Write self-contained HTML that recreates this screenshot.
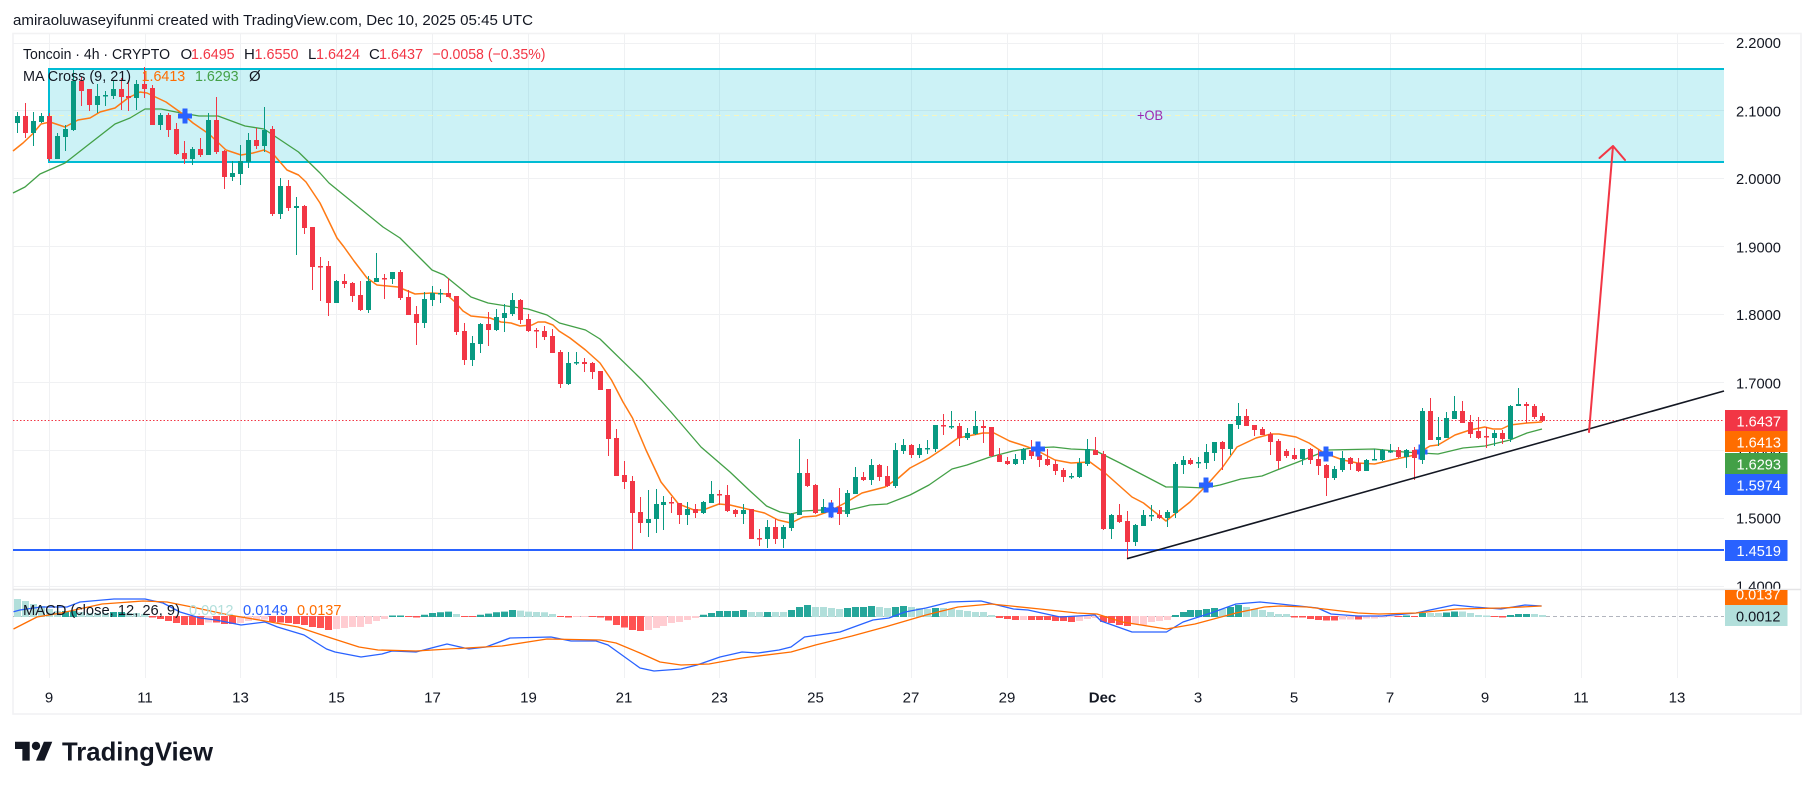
<!DOCTYPE html>
<html lang="en">
<head>
<meta charset="utf-8">
<title>Toncoin 4h chart</title>
<style>
html,body{margin:0;padding:0;background:#fff;width:1814px;height:789px;overflow:hidden}
svg{display:block}
text{font-family:"Liberation Sans",sans-serif;font-size:15px;fill:#131722}
.r{fill:#f23645}
.w{fill:#fff}
</style>
</head>
<body>
<svg width="1814" height="789" viewBox="0 0 1814 789" xmlns="http://www.w3.org/2000/svg">
<rect width="1814" height="789" fill="#fff"/>
<text x="13" y="25" style="font-size:14.5px" textLength="520" lengthAdjust="spacingAndGlyphs">amiraoluwaseyifunmi created with TradingView.com, Dec 10, 2025 05:45 UTC</text>

<!-- frame -->
<rect x="13" y="33.5" width="1788" height="680.5" fill="#fff" stroke="#f2f2f3" stroke-width="1.6"/>

<!-- grid -->
<path fill="none" stroke="#f0f1f3" stroke-width="1" d="M49.5 34V678M145.5 34V678M240.5 34V678M336.5 34V678M432.5 34V678M528.5 34V678M624.5 34V678M719.5 34V678M815.5 34V678M911.5 34V678M1007.5 34V678M1102.5 34V678M1198.5 34V678M1294.5 34V678M1390.5 34V678M1485.5 34V678M1581.5 34V678M1677.5 34V678"/>
<path fill="none" stroke="#f0f1f3" stroke-width="1" d="M13 43.5H1724M13 110.5H1724M13 178.5H1724M13 246.5H1724M13 314.5H1724M13 382.5H1724M13 450.5H1724M13 518.5H1724M13 586.5H1724"/>

<!-- zone -->
<rect x="49" y="69" width="1675" height="93" fill="#00bcd4" fill-opacity=".2"/>
<path fill="none" stroke="#00bcd4" stroke-width="2" d="M1724 69H49V162H1724"/>
<path fill="none" stroke="#f5f5c0" stroke-width="1" stroke-dasharray="5 4" d="M50 115.5H1724"/>
<text x="1137" y="120" style="font-size:14px;fill:#9c27b0" textLength="26" lengthAdjust="spacingAndGlyphs">+OB</text>

<!-- last price, support -->
<path fill="none" stroke="#f23645" stroke-width="1" stroke-dasharray="1.5 2" d="M13 420.5H1724"/>
<path fill="none" stroke="#2962ff" stroke-width="2" d="M13 550H1724"/>

<!-- MA21 -->
<path fill="none" stroke="#43a047" stroke-width="1.3" stroke-linejoin="round" d="M13 193L25 187L40 174L65 163L88 145L115 124L130 118L145 109L161 109L176 112L199 116L218 116L245 126L264 129L298.5 152L320 173L329 183L383 227L400 238L421 259L432 270L444 275L471 297L488 303L513 307L528 309L547 315L559.5 323L585.5 330L600 339L642 380L671 412L701 447L730 472L749 490L766.5 506L780 512L791 514L803 511L822 510L845 511L870 505L887 504L910 495L929 485L952 469L967 465L990 457L1013 451L1032 448L1053.5 447L1071 449L1094 450L1120 463L1143 475L1166 487L1182 487L1205 488L1220 485L1241 479L1262 476L1277 470L1298 462L1328 450L1374.5 449L1404 452L1438 454L1463 448L1485 446L1510 440L1527 433L1542 429"/>
<!-- MA9 -->
<path fill="none" stroke="#ff7a14" stroke-width="1.5" stroke-linejoin="round" d="M13 151L23 143L32.5 134L41 124L50 122L65 127L78 120L90 118L100 112L115 108L128 98L140 92L147 93L166 102L180 112L193 123L209 134L226 150L241 155L253 153L264 150L274 155L287 170L298.5 175L306 182L320 203L337 238L344 247L354 261L367 278L377 285L398 287L415 294L432 293L446 294L455 302L463 311L471 316L490 318L501 322L511 323L520 326L532 325L538 322L545 322L553 325L559 331L570 338L585.5 350L600 363L611.5 380L623 402L632.5 418L646 450L661 482L678.5 504L694 510L703 510L719 504L730 505L747 509L764.5 513L778 520L791 523L803 517L816 516L830 511L845 503L862 493L885 487L898.5 478L910 468L929 458L944 448L958 438L983 433L994 433L1009.5 441L1025 446L1036 450L1055 460L1071 463L1090 462L1105 473L1132 497L1143.5 503L1166 521L1190 502L1205 487L1222 468L1237 447L1256 438L1271 434L1279 434L1296 437L1309 443L1324 453L1343 460L1357.5 463L1374.5 464L1396 459L1415 455L1430 446L1438 445L1455 435L1470 430L1484.6 427L1493 429L1501.5 429L1510 425L1527 423L1542 422"/>

<!-- cross behind candle -->
<path fill="#2962ff" d="M1418.5 444.5h5v5h4v5h-4v5h-5v-5h-4v-5h4z"/>

<!-- candles: green wicks -->
<path fill="none" stroke="#089981" stroke-width="1" d="M17.5 112V133M33.5 112V146M41.5 113V123M57.5 133V159M65.5 125V151M73.5 70V131M97.5 84V113M105.5 91V106M113.5 80V99M136.5 80V110M160.5 113V130M192.5 147V165M208.5 113V155M232.5 161V181M240.5 145V185M248.5 133V168M264.5 107V152M280.5 178V219M296.5 197V255M336.5 280V303M368.5 276V313M376.5 253V282M392.5 272V284M424.5 292V328M432.5 286V306M440.5 289V303M472.5 336V366M480.5 323V353M496.5 309V331M504.5 304V332M512.5 293V316M568.5 352V385M576.5 352V365M648.5 490V537M656.5 489V533M663.5 496V530M687.5 502V525M703.5 501V514M711.5 481V503M743.5 504V524M767.5 520V548M783.5 525V548M791.5 513V531M799.5 439V515M823.5 499V513M847.5 490V517M855.5 467V494M871.5 459V485M895.5 443V488M903.5 439V454M919.5 444V458M927.5 440V454M935.5 425V452M951.5 411V429M967.5 428V440M975.5 411V435M1015.5 454V465M1023.5 448V464M1071.5 473V479M1079.5 458V478M1087.5 439V466M1111.5 514V539M1135.5 524V546M1143.5 510V526M1151.5 505V521M1167.5 510V527M1175.5 462V518M1183.5 456V474M1198.5 457V468M1206.5 444V469M1214.5 442V461M1230.5 424V455M1238.5 403V429M1302.5 449V465M1334.5 466V480M1342.5 451V472M1366.5 459V471M1374.5 449V460M1382.5 449V461M1390.5 444V453M1406.5 449V468M1422.5 408V464M1438.5 417V446M1446.5 412V438M1454.5 396V419M1494.5 430V446M1510.5 405V442M1518.5 388V406"/>
<!-- green bodies -->
<path fill="none" stroke="#089981" stroke-width="5" d="M17.5 116V123M33.5 121V133M41.5 116V122M57.5 136V159M65.5 129V137M73.5 81V130M97.5 96V105M105.5 95V96.5M113.5 89V96M136.5 84V98M160.5 115V125M192.5 149V159M208.5 120V155M232.5 173V177M240.5 161V174M248.5 140V162M264.5 130V146M280.5 186V214M296.5 206V208M336.5 281V303M368.5 281V310M376.5 278V282M392.5 272V279M424.5 299V323M432.5 293V300M440.5 293V294.5M472.5 343V360M480.5 324V344M496.5 317V330M504.5 313V318M512.5 300V314M568.5 363V384M576.5 362V363.5M648.5 519V523M656.5 504V519M663.5 502V505M687.5 509V515M703.5 502V513M711.5 494V503M743.5 510V514M767.5 527V539M783.5 527V539M791.5 514V528M799.5 473V515M823.5 507V513M847.5 493V514M855.5 477V494M871.5 465V480M895.5 450V486M903.5 445V451M919.5 448V455M927.5 448V449.5M935.5 425V449M951.5 426V427.5M967.5 433V438M975.5 426V434M1015.5 459V464M1023.5 449V460M1071.5 476V477.5M1079.5 463V477M1087.5 449V464M1111.5 515V529M1135.5 525V542M1143.5 515V526M1151.5 515V516.5M1167.5 512V518M1175.5 464V513M1183.5 460V465M1198.5 462V463.5M1206.5 452V463M1214.5 442V453M1230.5 424V449M1238.5 416V425M1302.5 449V459M1334.5 469V478M1342.5 458V470M1366.5 460V471M1374.5 459V460.5M1382.5 450V460M1390.5 451V452.5M1406.5 450V457M1422.5 411V460M1438.5 437V440M1446.5 418V438M1454.5 411V419M1494.5 433V438M1510.5 406V439M1518.5 404V406"/>
<!-- red wicks -->
<path fill="none" stroke="#f23645" stroke-width="1" d="M25.5 103V138M49.5 113V161M81.5 77V106M89.5 89V111M121.5 78V110M128.5 80V111M144.5 67V98M152.5 85V125M168.5 113V137M176.5 123V155M184.5 141V164M200.5 138V157M216.5 97V154M224.5 150V189M256.5 128V149M272.5 126V216M288.5 180V211M304.5 205V234M312.5 227V290M320.5 257V301M328.5 261V316M344.5 274V288M352.5 282V302M360.5 281V311M384.5 274V299M400.5 270V300M408.5 290V315M416.5 306V345M448.5 278V297M456.5 296V335M464.5 323V365M488.5 312V346M520.5 299V324M528.5 314V332M536.5 328V348M544.5 326V340M552.5 329V353M560.5 350V388M584.5 358V372M592.5 362V379M600.5 371V390M608.5 389V456M616.5 429V476M624.5 461V489M632.5 476V550M640.5 497V533M671.5 497V513M679.5 503V524M695.5 504V518M719.5 490V505M727.5 485V512M735.5 509V517M751.5 509V539M759.5 529V546M775.5 519V544M807.5 459V487M815.5 484V514M831.5 500V518M839.5 488V525M863.5 472V481M879.5 464V481M887.5 466V487M911.5 444V458M943.5 414V435M959.5 423V446M983.5 421V443M991.5 427V457M999.5 448V462M1007.5 457V465M1031.5 440V459M1039.5 443V467M1047.5 449V466M1055.5 460V475M1063.5 468V482M1095.5 437V455M1103.5 451V530M1119.5 504V523M1127.5 511V559M1159.5 510V519M1190.5 458V465M1222.5 441V470M1246.5 409V426M1254.5 425V436M1262.5 427V435M1270.5 432V455M1278.5 439V469M1286.5 449V458M1294.5 448V460M1310.5 448V464M1318.5 450V475M1326.5 464V496M1350.5 457V470M1358.5 458V472M1398.5 447V458M1414.5 447V480M1430.5 398V440M1462.5 401V423M1470.5 415V438M1478.5 417V439M1486.5 427V448M1502.5 430V444M1526.5 402V423M1534.5 404V419M1542.5 413V422"/>
<!-- red bodies -->
<path fill="none" stroke="#f23645" stroke-width="5" d="M25.5 116V133M49.5 116V159M81.5 81V91M89.5 89V105M121.5 89V97M128.5 96V98M144.5 84V89M152.5 88V125M168.5 115V130M176.5 129V154M184.5 153V159M200.5 149V155M216.5 120V152M224.5 151V177M256.5 140V146M272.5 129V214M288.5 186V208M304.5 206V228M312.5 227V267M320.5 266V267.5M328.5 266V303M344.5 281V284M352.5 283V296M360.5 295V310M384.5 278V279.5M400.5 272V298M408.5 297V315M416.5 314V323M448.5 293V297M456.5 296V332M464.5 331V360M488.5 324V330M520.5 300V320M528.5 319V331M536.5 330V331.5M544.5 331V337M552.5 336V353M560.5 352V384M584.5 362V364M592.5 363V372M600.5 371V390M608.5 389V439M616.5 438V476M624.5 475V482M632.5 481V513M640.5 512V523M671.5 502V503.5M679.5 503V515M695.5 509V513M719.5 494V495.5M727.5 495V511M735.5 510V514M751.5 509V539M759.5 538V539.5M775.5 527V539M807.5 473V486M815.5 485V513M831.5 507V512M839.5 507V514M863.5 477V480M879.5 465V477M887.5 476V486M911.5 445V455M943.5 425V426.5M959.5 426V438M983.5 426V428M991.5 427V456M999.5 455V462M1007.5 461V464M1031.5 450V456M1039.5 455V460M1047.5 459V465M1055.5 464V471M1063.5 470V477M1095.5 450V455M1103.5 454V529M1119.5 515V522M1127.5 521V542M1159.5 515V518M1190.5 460V464M1222.5 442V449M1246.5 416V426M1254.5 425V430M1262.5 429V435M1270.5 434V442M1278.5 441V461M1286.5 451V456M1294.5 455V459M1310.5 449V460M1318.5 459V466M1326.5 465V478M1350.5 458V464M1358.5 463V471M1398.5 450V457M1414.5 450V458M1430.5 411V440M1462.5 411V423M1470.5 422V434M1478.5 431V438M1486.5 436V437.5M1502.5 433V439M1526.5 404V406M1534.5 406V417M1542.5 416V421"/>

<!-- crosses -->
<path fill="#2962ff" d="M182.5 108.5h5v5h4.5v5h-4.5v5h-5v-5h-4.5v-5h4.5zM828.5 502.5h5v5h4.5v5h-4.5v5h-5v-5h-4.5v-5h4.5zM1035.5 441.5h5v5h4.5v5h-4.5v5h-5v-5h-4.5v-5h4.5zM1203.5 477.5h5v5h4.5v5h-4.5v5h-5v-5h-4.5v-5h4.5zM1323.5 446.5h5v5h4.5v5h-4.5v5h-5v-5h-4.5v-5h4.5z"/>

<!-- drawings -->
<path fill="none" stroke="#131722" stroke-width="1.6" d="M1127 558.7L1724 391"/>
<path fill="none" stroke="#f23645" stroke-width="2" stroke-linecap="round" stroke-linejoin="round" d="M1589 432L1613 146M1599.5 158L1613 146L1625 160"/>

<!-- legend -->
<text x="23" y="59" textLength="147" lengthAdjust="spacingAndGlyphs">Toncoin · 4h · CRYPTO</text>
<text x="180.5" y="59">O</text><text class="r" x="191" y="59" textLength="43.6" lengthAdjust="spacingAndGlyphs">1.6495</text>
<text x="244" y="59">H</text><text class="r" x="254.5" y="59" textLength="44" lengthAdjust="spacingAndGlyphs">1.6550</text>
<text x="308" y="59">L</text><text class="r" x="316" y="59" textLength="44" lengthAdjust="spacingAndGlyphs">1.6424</text>
<text x="369" y="59">C</text><text class="r" x="379" y="59" textLength="44" lengthAdjust="spacingAndGlyphs">1.6437</text>
<text class="r" x="432.5" y="59" textLength="113" lengthAdjust="spacingAndGlyphs">−0.0058 (−0.35%)</text>
<text x="23" y="81" textLength="108" lengthAdjust="spacingAndGlyphs">MA Cross (9, 21)</text>
<text x="141.6" y="81" style="fill:#ff6d00" textLength="43.6" lengthAdjust="spacingAndGlyphs">1.6413</text>
<text x="195" y="81" style="fill:#43a047" textLength="43.6" lengthAdjust="spacingAndGlyphs">1.6293</text>
<text x="249" y="81">Ø</text>

<!-- price axis -->
<g>
<text x="1736" y="48" textLength="45" lengthAdjust="spacingAndGlyphs">2.2000</text>
<text x="1736" y="116.5" textLength="45" lengthAdjust="spacingAndGlyphs">2.1000</text>
<text x="1736" y="184" textLength="45" lengthAdjust="spacingAndGlyphs">2.0000</text>
<text x="1736" y="252.3" textLength="45" lengthAdjust="spacingAndGlyphs">1.9000</text>
<text x="1736" y="320" textLength="45" lengthAdjust="spacingAndGlyphs">1.8000</text>
<text x="1736" y="388.3" textLength="45" lengthAdjust="spacingAndGlyphs">1.7000</text>
<text x="1736" y="455.8" textLength="45" lengthAdjust="spacingAndGlyphs">1.6000</text>
<text x="1736" y="523.3" textLength="45" lengthAdjust="spacingAndGlyphs">1.5000</text>
<text x="1736" y="591.7" textLength="45" lengthAdjust="spacingAndGlyphs">1.4000</text>
</g>
<rect x="1725" y="410" width="62.5" height="21" fill="#f23645"/>
<rect x="1725" y="431" width="62.5" height="21" fill="#ff6d00"/>
<rect x="1725" y="453" width="62.5" height="21" fill="#43a047"/>
<rect x="1725" y="474" width="62.5" height="21" fill="#2962ff"/>
<rect x="1725" y="540" width="62.5" height="21" fill="#2962ff"/>
<text class="w" x="1736.5" y="426.7" textLength="44.5" lengthAdjust="spacingAndGlyphs">1.6437</text>
<text class="w" x="1736.5" y="447.3" textLength="44.5" lengthAdjust="spacingAndGlyphs">1.6413</text>
<text class="w" x="1736.5" y="469.3" textLength="44.5" lengthAdjust="spacingAndGlyphs">1.6293</text>
<text class="w" x="1736.5" y="490.7" textLength="44.5" lengthAdjust="spacingAndGlyphs">1.5974</text>
<text class="w" x="1736.5" y="556" textLength="44.5" lengthAdjust="spacingAndGlyphs">1.4519</text>

<!-- lower pane -->
<rect x="1724" y="590" width="76" height="88" fill="#fff"/>
<path fill="none" stroke="#e4e4e6" stroke-width="1.5" d="M13 589.5H1801"/>
<path fill="none" stroke="#b2b5be" stroke-width="1" stroke-dasharray="4 3" d="M13 616.5H1724"/>

<!-- histogram -->
<path fill="none" stroke="#b2dfdb" stroke-width="7" d="M17.5 617V599M25.5 617V601M33.5 617V604M41.5 617V606M49.5 617V609M57.5 617V611M81.5 617V612M89.5 617V613M97.5 617V613M105.5 617V613M128.5 617V613M136.5 617V613M144.5 617V614M456.5 617V614M520.5 617V610.6M528.5 617V611.6M536.5 617V612M544.5 617V612.3M552.5 617V614M751.5 617V612M759.5 617V612M775.5 617V612M783.5 617V612M815.5 617V607M823.5 617V607M831.5 617V608M839.5 617V609M879.5 617V607M887.5 617V608M911.5 617V607M919.5 617V608M927.5 617V609M943.5 617V608M951.5 617V609M959.5 617V610M967.5 617V611M975.5 617V612M983.5 617V612M991.5 617V615M1222.5 617V609M1246.5 617V607M1254.5 617V609M1262.5 617V610M1270.5 617V612M1278.5 617V614M1286.5 617V614M1430.5 617V613M1438.5 617V613M1462.5 617V611.5M1470.5 617V613M1478.5 617V615M1486.5 617V615.5M1534.5 617V614M1542.5 617V615"/>
<path fill="none" stroke="#26a69a" stroke-width="7" d="M65.5 617V611M73.5 617V611M113.5 617V612M121.5 617V612M392.5 617V615.5M400.5 617V615.5M424.5 617V614.8M432.5 617V613M440.5 617V612.3M448.5 617V611.6M480.5 617V614.8M488.5 617V613.6M496.5 617V612.3M504.5 617V611.6M512.5 617V610M703.5 617V614.8M711.5 617V613M719.5 617V611M727.5 617V611M735.5 617V611M743.5 617V610M767.5 617V612M791.5 617V610M799.5 617V607M807.5 617V605M847.5 617V608M855.5 617V607M863.5 617V607M871.5 617V606M895.5 617V607M903.5 617V606M935.5 617V608M1175.5 617V615M1183.5 617V612M1190.5 617V610M1198.5 617V610M1206.5 617V609M1214.5 617V608M1230.5 617V607M1238.5 617V605M1406.5 617V615.5M1422.5 617V613M1446.5 617V612.5M1454.5 617V611.5M1510.5 617V615M1518.5 617V614M1526.5 617V614"/>
<path fill="none" stroke="#ffcdd2" stroke-width="7" d="M208.5 616V622.5M240.5 616V623M248.5 616V621M256.5 616V620M264.5 616V619.5M336.5 616V629M344.5 616V628M352.5 616V627M360.5 616V627M368.5 616V624M376.5 616V621M384.5 616V619M576.5 616V617M584.5 616V617M648.5 616V630M656.5 616V628M663.5 616V626M671.5 616V623M679.5 616V622M687.5 616V620M695.5 616V618M1023.5 616V620M1079.5 616V621M1087.5 616V619M1095.5 616V618M1135.5 616V624M1143.5 616V625M1151.5 616V622M1159.5 616V621M1167.5 616V620M1342.5 616V619.5M1350.5 616V619.5M1366.5 616V618.5M1374.5 616V618.5M1382.5 616V617.5M1390.5 616V617"/>
<path fill="none" stroke="#ff5252" stroke-width="7" d="M152.5 616V617.5M160.5 616V619M168.5 616V621M176.5 616V623M184.5 616V625M192.5 616V625M200.5 616V625M216.5 616V622.5M224.5 616V624M232.5 616V624M272.5 616V622M280.5 616V622.5M288.5 616V623M296.5 616V624M304.5 616V625M312.5 616V627M320.5 616V628M328.5 616V630M408.5 616V617M416.5 616V617.5M464.5 616V617M472.5 616V617M560.5 616V617M568.5 616V617.5M592.5 616V617M600.5 616V617.5M608.5 616V620.5M616.5 616V625M624.5 616V627.5M632.5 616V630M640.5 616V631M999.5 616V618M1007.5 616V619M1015.5 616V620M1031.5 616V620M1039.5 616V620M1047.5 616V620M1055.5 616V621M1063.5 616V621M1071.5 616V622M1103.5 616V622M1111.5 616V623M1119.5 616V625M1127.5 616V626M1294.5 616V617.5M1302.5 616V617.5M1310.5 616V619M1318.5 616V620M1326.5 616V620.5M1334.5 616V620.5M1358.5 616V619.5M1398.5 616V617M1414.5 616V617M1494.5 616V617M1502.5 616V617.5"/>

<!-- MACD line -->
<path fill="none" stroke="#2962ff" stroke-width="1.3" stroke-linejoin="round" d="M13.5 611.7L20 610L41 607L67 607L80 602L114 599L145 599L163 603L180 612L200 618L216 620L241 625L265 622L277.5 627L304 635L326.5 649L335 652L361 657L382 654L392 651L416 652L447 644L469 649L486 647L510 638L551 637L571 641L596 641L608 645L640 668L654 671L681 669L697 665L720 657L742 652L758 653L779 650L791 647L804.5 637L840 632L873 620L889 618L905 612L926 608L950 602L981 601L1013.5 609L1028 610L1060 617L1095 615L1101 621L1132 632L1166.5 632L1183 622L1211 613L1236 604L1260 602L1280 604L1317.5 608L1331 614L1358 616L1382 616L1416 613L1430 610L1454 605L1474 607L1501 609L1525 605L1541.6 606"/>
<!-- signal line -->
<path fill="none" stroke="#ff6d00" stroke-width="1.3" stroke-linejoin="round" d="M13.5 629L37 617L61 613L102 604L143 601L167 602L192 607L229 615L265 621L298 627L331 638L359 647L378 650L416 651L449 649L502 646L547 639L600 640L616 643L640 653L660 662L681 665L709 664L742 658L791 652L815.5 645L852 636L885 627L926 615L958 607L991 604L1040 609L1077 613L1097 614L1122 622L1166.5 629L1195 624L1236 613L1264.5 607L1280 606L1307 607L1358 613L1379 614L1416 613L1457 609L1501 608L1541.6 606"/>

<!-- MACD legend -->
<text x="23" y="615" textLength="157" lengthAdjust="spacingAndGlyphs">MACD (close, 12, 26, 9)</text>
<text x="189" y="615" style="fill:#b2dfdb" textLength="44.5" lengthAdjust="spacingAndGlyphs">0.0012</text>
<text x="243" y="615" style="fill:#2962ff" textLength="45" lengthAdjust="spacingAndGlyphs">0.0149</text>
<text x="297" y="615" style="fill:#ff6d00" textLength="44.5" lengthAdjust="spacingAndGlyphs">0.0137</text>

<!-- MACD tags -->
<rect x="1725" y="590" width="62.5" height="15" fill="#ff6d00"/>
<rect x="1725" y="605" width="62.5" height="21" fill="#b2dfdb"/>
<text class="w" x="1736" y="599.3" textLength="44.5" lengthAdjust="spacingAndGlyphs">0.0137</text>
<text x="1736" y="621.7" textLength="44.5" lengthAdjust="spacingAndGlyphs">0.0012</text>

<!-- time axis -->
<g text-anchor="middle">
<text x="49" y="702.3">9</text>
<text x="145" y="702.3">11</text>
<text x="240.5" y="702.3">13</text>
<text x="336.5" y="702.3">15</text>
<text x="432.5" y="702.3">17</text>
<text x="528.5" y="702.3">19</text>
<text x="624" y="702.3">21</text>
<text x="719.5" y="702.3">23</text>
<text x="815.5" y="702.3">25</text>
<text x="911" y="702.3">27</text>
<text x="1007" y="702.3">29</text>
<text x="1102.5" y="702.3" font-weight="700">Dec</text>
<text x="1198" y="702.3">3</text>
<text x="1294" y="702.3">5</text>
<text x="1390" y="702.3">7</text>
<text x="1485" y="702.3">9</text>
<text x="1581" y="702.3">11</text>
<text x="1677" y="702.3">13</text>
</g>

<!-- logo -->
<g transform="translate(15 737.5) scale(1.05)" fill="#131722">
<path d="M14 22H7V11H0V4h14v18zM28 22h-8l7.5-18h8L28 22z"/>
<circle cx="20" cy="8" r="4"/>
</g>
<text x="62" y="760.7" style="font-size:26px;font-weight:700" textLength="151" lengthAdjust="spacingAndGlyphs">TradingView</text>
</svg>
</body>
</html>
